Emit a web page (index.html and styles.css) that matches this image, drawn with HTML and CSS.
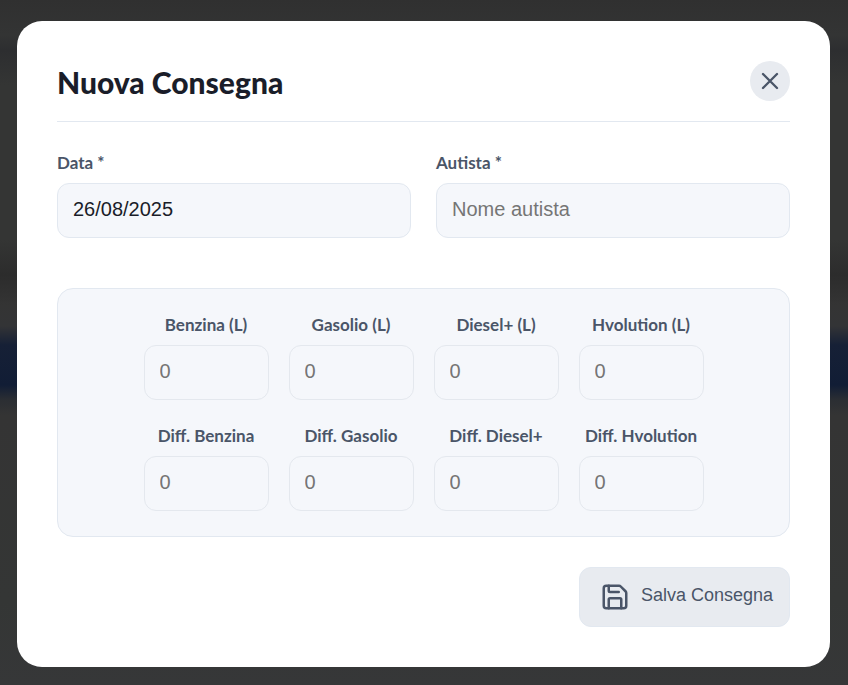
FILE: index.html
```html
<!DOCTYPE html>
<html lang="it">
<head>
<meta charset="utf-8">
<title>Nuova Consegna</title>
<link rel="stylesheet" href="styles.css">
</head>
<body>
<main class="dialog">
  <header class="header">
    <h1 class="title">Nuova Consegna</h1>
    <button class="close" aria-label="Chiudi"><svg width="28" height="28" viewBox="0 0 24 24"><path d="M18 6 6 18M6 6l12 12"/></svg></button>
  </header>
  <div class="row">
    <div class="field"><label><span class="w-data">Data *</span></label><input class="input" value="26/08/2025"></div>
    <div class="field"><label><span class="w-autista">Autista *</span></label><input class="input" placeholder="Nome autista"></div>
  </div>
  <section class="fuels">
    <div class="field fuel"><label><span class="w-benzina">Benzina (L)</span></label><input class="input" placeholder="0"></div>
    <div class="field fuel"><label><span class="w-gasolio">Gasolio (L)</span></label><input class="input" placeholder="0"></div>
    <div class="field fuel"><label><span class="w-diesel">Diesel+ (L)</span></label><input class="input" placeholder="0"></div>
    <div class="field fuel"><label><span class="w-hvo">Hvolution (L)</span></label><input class="input" placeholder="0"></div>
    <div class="field fuel"><label><span class="w-dbenzina">Diff. Benzina</span></label><input class="input" placeholder="0"></div>
    <div class="field fuel"><label><span class="w-dgasolio">Diff. Gasolio</span></label><input class="input" placeholder="0"></div>
    <div class="field fuel"><label><span class="w-ddiesel">Diff. Diesel+</span></label><input class="input" placeholder="0"></div>
    <div class="field fuel"><label><span class="w-dhvo">Diff. Hvolution</span></label><input class="input" placeholder="0"></div>
  </section>
  <footer class="footer">
    <button class="save"><svg width="30" height="30" viewBox="0 0 24 24"><path d="M15.2 3a2 2 0 0 1 1.4.6l3.8 3.8a2 2 0 0 1 .6 1.4V19a2 2 0 0 1-2 2H5a2 2 0 0 1-2-2V5a2 2 0 0 1 2-2z"/><path d="M17 21v-7a1 1 0 0 0-1-1H8a1 1 0 0 0-1 1v7M7 3v4a1 1 0 0 0 1 1h7"/></svg><span>Salva Consegna</span></button>
  </footer>
</main>
</body>
</html>
```
FILE: styles.css
```css
* { box-sizing: border-box; }
body {
  margin: 0;
  height: 685px;
  padding: 21px 18px 18px 17px;
  overflow: hidden;
  background: linear-gradient(#303030 0, #333434 35px, #2d2e30 50px, #343534 85px, #343534 240px, #2c2c2c 275px, #343434 305px, #333436 326px, #162036 345px, #111d35 385px, #2b2e33 400px, #343434 415px, #343635 600px, #363738 685px);
}
.dialog {
  height: 646px;
  padding: 40px;
  background: #fff;
  border-radius: 25px;
  font-family: Lato, "Liberation Sans", sans-serif;
}
.header {
  display: flex;
  justify-content: space-between;
  height: 61px;
  border-bottom: 1px solid #e2e8f0;
}
.title {
  margin: 0;
  font-size: 30px;
  line-height: 42px;
  font-weight: 900;
  letter-spacing: 0;
  color: #1a1d29;
}
.close {
  display: grid;
  place-items: center;
  width: 40px;
  height: 40px;
  padding: 0;
  border: 0;
  border-radius: 50%;
  background: #e8ebf0;
}
svg {
  flex: none;
  fill: none;
  stroke: #4a5568;
  stroke-width: 2;
  stroke-linecap: round;
  stroke-linejoin: round;
}
.row {
  display: grid;
  grid-template-columns: 1fr 1fr;
  gap: 25px;
  margin-top: 30px;
}
.field { min-width: 0; }
label {
  display: block;
  height: 31px;
  font-size: 17px;
  line-height: 22px;
  font-weight: 700;
  color: #4a5568;
  white-space: nowrap;
}
.input {
  display: block;
  width: 100%;
  height: 55px;
  padding: 0 15px 2px;
  border: 1px solid #e2e8f0;
  border-radius: 12px;
  background: #f5f7fb;
  font: 20px "Liberation Sans", Arial, sans-serif;
  color: #1a1d29;
}
.input::placeholder { color: #757575; opacity: 1; }
.fuels {
  display: grid;
  grid-template-columns: repeat(4, 125px);
  justify-content: center;
  gap: 25px 20px;
  height: 249px;
  margin-top: 50px;
  padding: 25px 0;
  border: 1px solid #e2e8f0;
  border-radius: 16px;
  background: #f5f7fb;
}
.fuel label { text-align: center; }
.fuel .input { border-color: #e4e8ee; }
.footer {
  display: flex;
  justify-content: flex-end;
  margin-top: 30px;
}
.save {
  display: flex;
  align-items: center;
  gap: 11px;
  width: 211px;
  height: 60px;
  padding: 0 0 0 20px;
  border: 1px solid #e2e8f0;
  border-radius: 12px;
  background: #e8ebf0;
  font: 18px "Liberation Sans", Arial, sans-serif;
  color: #4a5568;
  white-space: nowrap;
}
.save span { margin-top: -3px; }
```
